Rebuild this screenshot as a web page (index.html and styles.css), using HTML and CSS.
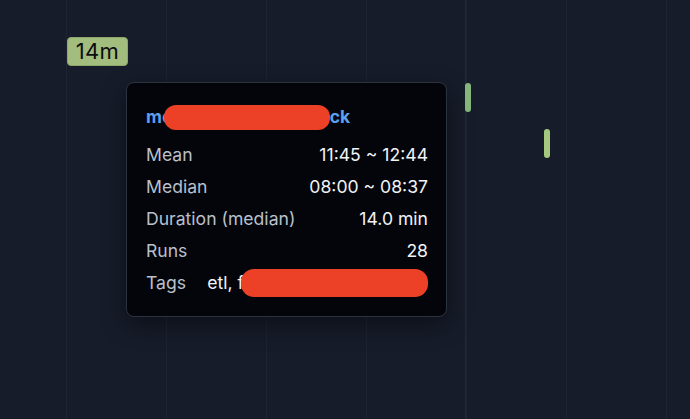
FILE: index.html
```html
<!DOCTYPE html>
<html>
<head>
<meta charset="utf-8">
<link rel="stylesheet" href="styles.css">
</head>
<body>
<div class="canvas">
  <div class="badge">14m</div>
  <div class="bar bar-a"></div>
  <div class="bar bar-b"></div>
  <div class="tooltip">
    <div class="title">mo<span class="redact redact-title"></span>ck</div>
    <div class="row"><span class="label">Mean</span><span class="value">11:45 ~ 12:44</span></div>
    <div class="row"><span class="label">Median</span><span class="value">08:00 ~ 08:37</span></div>
    <div class="row"><span class="label">Duration (median)</span><span class="value">14.0 min</span></div>
    <div class="row"><span class="label">Runs</span><span class="value">28</span></div>
    <div class="row row-tags"><span class="label">Tags</span><span class="value tags">etl, f<span class="redact redact-tags"></span></span></div>
  </div>
</div>
</body>
</html>
```

FILE: styles.css
```css
html, body {
  margin: 0;
  padding: 0;
  width: 690px;
  height: 419px;
  overflow: hidden;
  background: #171c2a;
  font-family: Inter, "Noto Sans", sans-serif;
}

.canvas {
  position: relative;
  width: 690px;
  height: 419px;
  background-color: #171c2a;
  background-image: repeating-linear-gradient(to right,
    transparent 0, transparent 66px,
    #1d2333 66px, #1d2333 67px,
    transparent 67px, transparent 100px);
  background-size: 100px 100%;
  background-position: 0 0;
}

.canvas::after {
  content: "";
  position: absolute;
  left: 465px;
  top: 0;
  width: 1px;
  height: 419px;
  background: #222939;
}

.badge {
  position: absolute;
  left: 67px;
  top: 37px;
  width: 61px;
  height: 29px;
  box-sizing: border-box;
  background: #a3bd7e;
  border: 1px solid #8ea66c;
  border-radius: 4px;
  color: #0b0d10;
  font-size: 22px;
  line-height: 27px;
  text-align: center;
  letter-spacing: 0.3px;
}

.bar {
  position: absolute;
  width: 6px;
  border-radius: 3px;
}
.bar-a {
  left: 465px;
  top: 83px;
  height: 29px;
  background: #86b87c;
  z-index: 2;
}
.bar-b {
  left: 544px;
  top: 129px;
  height: 29px;
  background: #a4c97e;
}

.tooltip {
  position: absolute;
  left: 126px;
  top: 82px;
  width: 321px;
  height: 235px;
  box-sizing: border-box;
  background: #03050b;
  border: 1px solid #2b3240;
  border-radius: 8px;
  box-shadow: 0 8px 24px rgba(0, 0, 0, 0.45);
  padding: 22px 18px 0 19px;
  z-index: 3;
}

.title {
  color: #5b9ff0;
  font-weight: 700;
  font-size: 17.5px;
  line-height: 24px;
  margin-bottom: 9px;
  white-space: nowrap;
}

.redact {
  display: inline-block;
  background: #ec4127;
  vertical-align: middle;
}
.redact-title {
  width: 166px;
  height: 25px;
  border-radius: 12px;
  margin-left: -9px;
  margin-top: -2px;
}

.row {
  display: flex;
  justify-content: space-between;
  align-items: center;
  gap: 20px;
  height: 32px;
  font-size: 17.6px;
  white-space: nowrap;
}
.label {
  color: #b9c0cc;
}
.value {
  color: #f2f3f5;
}
.tags {
  display: flex;
  align-items: center;
}
.redact-tags {
  width: 187px;
  height: 28px;
  border-radius: 13px;
  margin-left: -3px;
}
```
